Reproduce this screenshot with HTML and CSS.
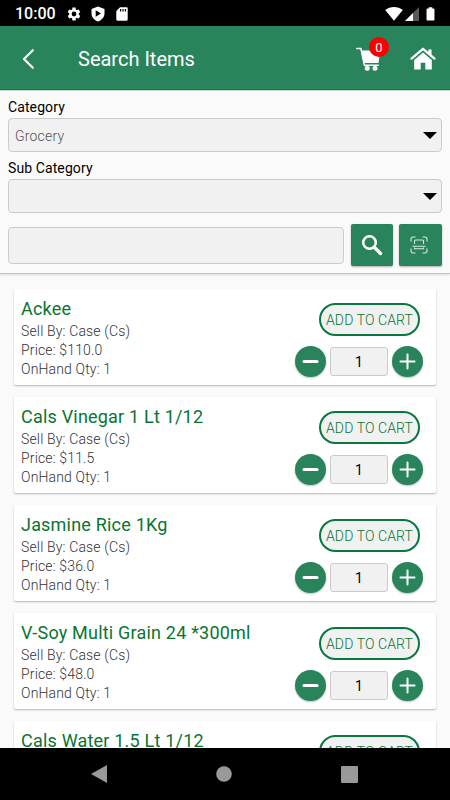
FILE: index.html
```html
<!DOCTYPE html>
<html lang="en">
<head>
  <meta charset="UTF-8">
  <meta name="viewport" content="width=device-width, initial-scale=1.0">
  <title>Search Items</title>
  <link rel="stylesheet" href="styles.css">
</head>
<body>
  <div class="statusbar">
    <span class="clock">10:00</span>
    <svg class="status-icon" width="16" height="16" viewBox="0 0 24 24"><path d="M19.14 12.94c.04-.3.06-.61.06-.94s-.02-.64-.07-.94l2.03-1.58c.18-.14.23-.41.12-.61l-1.92-3.32c-.12-.22-.37-.29-.59-.22l-2.39.96c-.5-.38-1.03-.7-1.62-.94l-.36-2.54c-.04-.24-.24-.41-.48-.41h-3.84c-.24 0-.43.17-.47.41l-.36 2.54c-.59.24-1.13.57-1.62.94l-2.39-.96c-.22-.08-.47 0-.59.22L2.74 8.87c-.12.21-.08.47.12.61l2.03 1.58c-.05.3-.09.63-.09.94s.02.64.07.94l-2.03 1.58c-.18.14-.23.41-.12.61l1.92 3.32c.12.22.37.29.59.22l2.39-.96c.5.38 1.03.7 1.62.94l.36 2.54c.05.24.24.41.48.41h3.84c.24 0 .44-.17.47-.41l.36-2.54c.59-.24 1.13-.56 1.62-.94l2.39.96c.22.08.47 0 .59-.22l1.92-3.32c.12-.22.07-.47-.12-.61zM12 15.6A3.6 3.6 0 1 1 12 8.4a3.6 3.6 0 0 1 0 7.200z"/></svg>
    <svg class="status-icon shield" width="14" height="16" viewBox="0 0 14 16"><path fill-rule="evenodd" d="M7 .5 13.500 3v4.500c0 3.700-2.600 6.600-6.500 8-3.900-1.400-6.500-4.300-6.500-8V3zM4.700 4.300v6.400l5.300-3.200z"/></svg>
    <svg class="status-icon card-icon" width="12" height="14" viewBox="0 0 12 14"><path fill-rule="evenodd" d="M4 .3h6.500c.7 0 1.200.5 1.200 1.200v11c0 .7-.5 1.200-1.200 1.200h-9c-.7 0-1.200-.5-1.200-1.200V4zM4 2v2.500h1.200V2zM6.400 2v2.500h1.200V2zM8.800 2v2.500H10V2z"/></svg>
    <div class="status-right">
      <svg class="status-icon" width="18" height="14" viewBox="0 0 18 14"><path d="M.2 3C5-.9 13-.9 17.800 3L9 13.700z"/></svg>
      <svg class="status-icon signal" width="14" height="14" viewBox="0 0 14 14"><path d="M0 14 14 0v14z" opacity=".35"/><path d="M0 14 8 6v8z"/></svg>
      <svg class="status-icon battery" width="9" height="14" viewBox="0 0 10 15"><path d="M3 0h4v1.500h1.500c.5 0 .9.4.9.9v11.500c0 .5-.4.9-.9.9h-7c-.5 0-.9-.4-.9-.9V2.400c0-.5.4-.9.9-.9H3z"/></svg>
    </div>
  </div>

  <div class="header">
    <svg class="back" width="12" height="20" viewBox="0 0 12 20"><path d="M10.800 1.200 2 10l8.800 8.800"/></svg>
    <h1>Search Items</h1>
    <div class="cart">
      <svg width="26" height="24" viewBox="0 0 26 24">
        <path d="M5.200 3.500h19L22.500 16H8.200z" fill="#fff"/>
        <path d="M.8 1.500h4.100L8.300 18.200h14" fill="none" stroke="#fff" stroke-width="1.500" stroke-linecap="round" stroke-linejoin="round"/>
        <circle cx="11.200" cy="21.300" r="2.500" fill="#fff"/>
        <circle cx="19" cy="21.300" r="2.500" fill="#fff"/>
      </svg>
      <span class="badge">0</span>
    </div>
    <svg class="home" width="26" height="23" viewBox="0 0 26 23">
      <path d="M18.300 2.500h3.200V9l-3.200-2.800z" fill="#fff"/>
      <path d="M1.500 11.600 13 1.800l11.500 9.800" fill="none" stroke="#fff" stroke-width="2.300" stroke-linecap="round" stroke-linejoin="round"/>
      <path d="M13 5.500 21.800 13v9.400h-6.500v-6.600h-4.600v6.600H4.200V13z" fill="#fff"/>
    </svg>
  </div>

  <div class="filters">
    <label>Category</label>
    <div class="select"><span>Grocery</span><i class="caret"></i></div>
    <label>Sub Category</label>
    <div class="select"><span></span><i class="caret"></i></div>
    <div class="search-row">
      <div class="search-input"></div>
      <div class="square-btn">
        <svg width="22" height="22" viewBox="0 0 22 22" fill="none" stroke="#fff"><circle cx="8.500" cy="8.500" r="6.300" stroke-width="2.500"/><path d="m13.500 13.500 6 6" stroke-width="3.400" stroke-linecap="round"/></svg>
      </div>
      <div class="square-btn scan">
        <svg width="18" height="18" viewBox="0 0 18 18" fill="none" stroke="#d5e8de"><path d="M1 5.500V3.200C1 2 2 1 3.200 1h2.300M12.500 1h2.300C16 1 17 2 17 3.200v2.300M1 12.500v2.300C1 16 2 17 3.200 17h2.300M12.500 17h2.300c1.200 0 2.200-1 2.200-2.200v-2.300M4.500 8V5c0-.6.400-1 1-1h7c.6 0 1 .4 1 1v3M2.500 10.200h13M4.500 11.500v1.300h9v-1.300" stroke-width="1.100"/></svg>
      </div>
    </div>
  </div>

  <div class="items" id="items">
    <!-- item cards are added by JS -->
  </div>

  <div class="navbar">
    <svg width="16" height="18" viewBox="0 0 16 18"><path d="M16 0v18L0 9z"/></svg>
    <svg width="16" height="16" viewBox="0 0 16 16"><circle cx="8" cy="8" r="7.800"/></svg>
    <svg width="17" height="17" viewBox="0 0 17 17"><rect width="17" height="17" rx="1"/></svg>
  </div>

  <script>
    const items = [
      { name: "Ackee", price: "110.0", qty: 1 },
      { name: "Cals Vinegar 1 Lt 1/12", price: "11.5", qty: 1 },
      { name: "Jasmine Rice 1Kg", price: "36.0", qty: 1 },
      { name: "V-Soy Multi Grain 24 *300ml", price: "48.0", qty: 1 },
      { name: "Cals Water 1.5 Lt 1/12" }
    ];
    const list = document.getElementById("items");

    items.forEach(item => {
      const card = document.createElement("div");
      card.className = "item";
      // items without a price only show their name
      const details = item.price ? `
          <p>Sell By: Case (Cs)</p>
          <p>Price: $${item.price}</p>
          <p>OnHand Qty: ${item.qty}</p>` : "";
      card.innerHTML = `
        <div class="info">
          <h2>${item.name}</h2>${details}
        </div>
        <div class="controls">
          <button class="add">ADD TO CART</button>
          <div class="stepper">
            <button class="round"><svg width="17" height="17" viewBox="0 0 17 17"><path d="M2 8.500h13" stroke-width="3"/></svg></button>
            <span class="count">1</span>
            <button class="round"><svg width="17" height="17" viewBox="0 0 17 17"><path d="M1.500 8.500h14M8.500 1.500v14" stroke-width="2"/></svg></button>
          </div>
        </div>
      `;
      list.appendChild(card);
    });
  </script>
</body>
</html>
```
FILE: styles.css
```css
* {
  box-sizing: border-box;
}
body {
  margin: 0;
  height: 800px;
  display: flex;
  flex-direction: column;
  overflow: hidden;
  background: #fafafa;
  font-family: Roboto, sans-serif;
  color: #000;
}
svg {
  display: block;
  flex-shrink: 0;
}
.statusbar {
  height: 26px;
  flex-shrink: 0;
  display: flex;
  align-items: center;
  padding: 1px 15px 0 15px;
  background: #000;
  color: #fff;
}
.clock {
  width: 51px;
  font-size: 16px;
  font-weight: 500;
  line-height: 26px;
  padding-top: 1px;
}
.status-icon {
  fill: #fff;
}
.shield {
  margin-left: 9px;
}
.card-icon {
  margin-left: 11px;
}
.status-right {
  display: flex;
  align-items: center;
  margin-left: auto;
}
.signal {
  margin-left: 2px;
}
.battery {
  margin-left: 7px;
}
.header {
  height: 64px;
  flex-shrink: 0;
  display: flex;
  align-items: center;
  padding: 2px 14px 0 22px;
  background: #29845b;
  border-bottom: 1px solid #15774a;
  color: #fff;
}
.back {
  fill: none;
  stroke: #fff;
  stroke-width: 2.2;
  stroke-linecap: round;
  stroke-linejoin: round;
}
.header h1 {
  margin: 0 0 0 44px;
  font-size: 20px;
  font-weight: 400;
}
.cart {
  position: relative;
  margin-left: auto;
}
.badge {
  position: absolute;
  top: -10px;
  left: 13px;
  width: 20px;
  height: 20px;
  border-radius: 50%;
  background: #f00;
  font-size: 13px;
  line-height: 21px;
  text-align: center;
}
.home {
  margin-left: 28px;
}
.filters {
  height: 184px;
  flex-shrink: 0;
  padding: 4px 8px 0;
  border-top: 1px solid #c9d8ce;
  border-bottom: 1px solid #c4c4c4;
  box-shadow: 0 1px 2px rgba(0, 0, 0, 0.12);
}
.filters label {
  display: block;
  height: 23px;
  padding-top: 1px;
  font-size: 14px;
  line-height: 23px;
  letter-spacing: 0.1px;
}
.select {
  height: 34px;
  display: flex;
  align-items: center;
  justify-content: space-between;
  margin-bottom: 4px;
  padding: 0 4px 0 6px;
  border: 1px solid #cbcbcb;
  border-radius: 4px;
  background: #f1f1f1;
  color: #555;
  font-size: 14px;
  font-weight: 300;
  letter-spacing: 0.2px;
}
.select span {
  padding-top: 1px;
}
.caret {
  border: 7px solid transparent;
  border-top-color: #000;
  border-bottom: 0;
}
.search-row {
  display: flex;
  align-items: center;
  gap: 7px;
  margin-top: 11px;
}
.search-input {
  flex: 1;
  height: 37px;
  border: 1px solid #cbcbcb;
  border-radius: 4px;
  background: #f1f1f1;
}
.square-btn {
  width: 42px;
  height: 42px;
  display: flex;
  align-items: center;
  justify-content: center;
  border-radius: 2px;
  background: #29845b;
  box-shadow: 0 1px 2px rgba(0, 0, 0, 0.3);
}
.scan {
  width: 43px;
  margin-left: -1px;
  padding-right: 4px;
}
.items {
  flex: 1;
  min-height: 0;
  overflow: hidden;
  padding: 15px 14px 0;
}
.item {
  height: 96px;
  display: flex;
  justify-content: space-between;
  margin-bottom: 12px;
  padding: 9px 13px 0 7px;
  border-radius: 2px;
  background: #fff;
  box-shadow: 0 1px 2px rgba(0, 0, 0, 0.28);
}
.info h2 {
  margin: 0 0 1px;
  color: #087530;
  font-size: 18px;
  font-weight: 400;
  line-height: 22px;
  letter-spacing: 0.2px;
}
.info p {
  margin: 0;
  padding-top: 1px;
  color: #333;
  font-size: 14px;
  font-weight: 300;
  line-height: 18px;
  letter-spacing: 0.15px;
}
.controls {
  display: flex;
  flex-direction: column;
  align-items: flex-end;
  padding-top: 5px;
}
.add {
  width: 101px;
  height: 33px;
  margin-right: 3px;
  padding: 1px 0 0;
  border: 2px solid #087840;
  border-radius: 17px;
  background: #f1f1f1;
  color: #087530;
  font-family: inherit;
  font-size: 14px;
  font-weight: 300;
  letter-spacing: 0.1px;
}
.stepper {
  display: flex;
  align-items: center;
  gap: 4px;
  margin-top: 10px;
}
.round {
  width: 31px;
  height: 31px;
  display: flex;
  align-items: center;
  justify-content: center;
  padding: 0;
  border: 0;
  border-radius: 50%;
  background: #29845b;
  box-shadow: 0 1px 2px rgba(0, 0, 0, 0.25);
}
.round svg {
  stroke: #fff;
  stroke-linecap: round;
}
.count {
  width: 58px;
  height: 29px;
  border: 1px solid #cbcbcb;
  border-radius: 3px;
  background: #f1f1f1;
  font-size: 14px;
  line-height: 28px;
  text-align: center;
}
.navbar {
  height: 52px;
  flex-shrink: 0;
  display: flex;
  align-items: center;
  justify-content: space-between;
  padding: 0 92px 0 91px;
  background: #000;
}
.navbar svg {
  fill: #999;
}
```
